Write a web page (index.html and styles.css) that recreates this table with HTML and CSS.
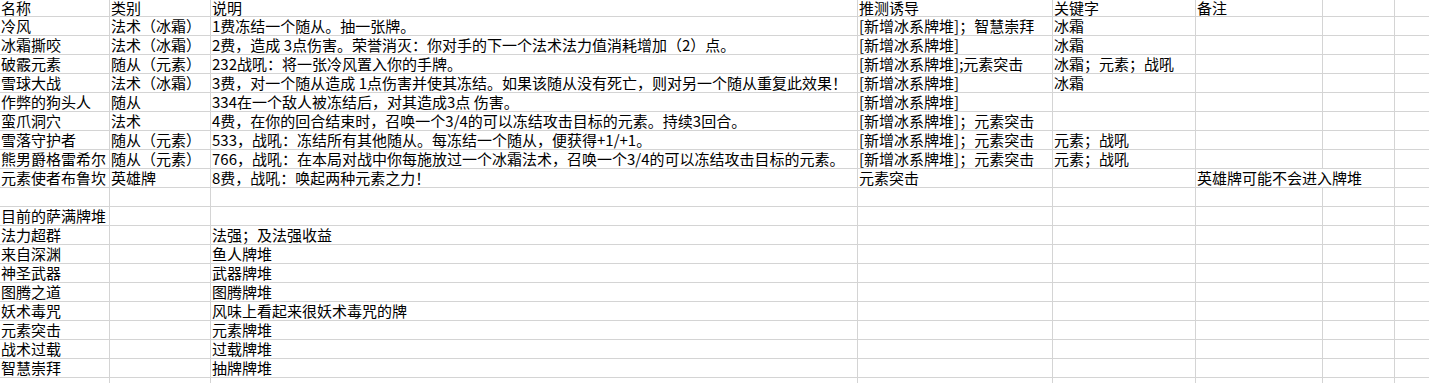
FILE: index.html
```html
<!DOCTYPE html>
<html lang="zh-CN">
<head>
<meta charset="utf-8">
<title>萨满牌堆</title>
<link rel="stylesheet" href="styles.css">
</head>
<body>
<div class="sheet">
  <div class="c h">名称</div><div class="c h">类别</div><div class="c h">说明</div><div class="c h">推测诱导</div><div class="c h">关键字</div><div class="c h">备注</div><div class="c h"></div><div class="c h"></div>

  <div class="c">冷风</div><div class="c">法术（冰霜）</div><div class="c">1费冻结一个随从。抽一张牌。</div><div class="c">[新增冰系牌堆]；智慧崇拜</div><div class="c">冰霜</div><div class="c"></div><div class="c"></div><div class="c"></div>

  <div class="c">冰霜撕咬</div><div class="c">法术（冰霜）</div><div class="c">2费，造成 3点伤害。荣誉消灭：你对手的下一个法术法力值消耗增加（2）点。</div><div class="c">[新增冰系牌堆]</div><div class="c">冰霜</div><div class="c"></div><div class="c"></div><div class="c"></div>

  <div class="c">破霰元素</div><div class="c">随从（元素）</div><div class="c">232战吼：将一张冷风置入你的手牌。</div><div class="c">[新增冰系牌堆];元素突击</div><div class="c">冰霜；元素；战吼</div><div class="c"></div><div class="c"></div><div class="c"></div>

  <div class="c">雪球大战</div><div class="c">法术（冰霜）</div><div class="c">3费，对一个随从造成 1点伤害并使其冻结。如果该随从没有死亡，则对另一个随从重复此效果！</div><div class="c">[新增冰系牌堆]</div><div class="c">冰霜</div><div class="c"></div><div class="c"></div><div class="c"></div>

  <div class="c">作弊的狗头人</div><div class="c">随从</div><div class="c">334在一个敌人被冻结后，对其造成3点 伤害。</div><div class="c">[新增冰系牌堆]</div><div class="c"></div><div class="c"></div><div class="c"></div><div class="c"></div>

  <div class="c">蛮爪洞穴</div><div class="c">法术</div><div class="c">4费，在你的回合结束时，召唤一个3/4的可以冻结攻击目标的元素。持续3回合。</div><div class="c">[新增冰系牌堆]；元素突击</div><div class="c"></div><div class="c"></div><div class="c"></div><div class="c"></div>

  <div class="c">雪落守护者</div><div class="c">随从（元素）</div><div class="c">533，战吼：冻结所有其他随从。每冻结一个随从，便获得+1/+1。</div><div class="c">[新增冰系牌堆]；元素突击</div><div class="c">元素；战吼</div><div class="c"></div><div class="c"></div><div class="c"></div>

  <div class="c">熊男爵格雷希尔</div><div class="c">随从（元素）</div><div class="c">766，战吼：在本局对战中你每施放过一个冰霜法术，召唤一个3/4的可以冻结攻击目标的元素。</div><div class="c">[新增冰系牌堆]；元素突击</div><div class="c">元素；战吼</div><div class="c"></div><div class="c"></div><div class="c"></div>

  <div class="c">元素使者布鲁坎</div><div class="c">英雄牌</div><div class="c">8费，战吼：唤起两种元素之力！</div><div class="c">元素突击</div><div class="c"></div><div class="c span2">英雄牌可能不会进入牌堆</div><div class="c"></div>

  <div class="c"></div><div class="c"></div><div class="c"></div><div class="c"></div><div class="c"></div><div class="c"></div><div class="c"></div><div class="c"></div>

  <div class="c">目前的萨满牌堆</div><div class="c"></div><div class="c"></div><div class="c"></div><div class="c"></div><div class="c"></div><div class="c"></div><div class="c"></div>

  <div class="c">法力超群</div><div class="c"></div><div class="c">法强；及法强收益</div><div class="c"></div><div class="c"></div><div class="c"></div><div class="c"></div><div class="c"></div>

  <div class="c">来自深渊</div><div class="c"></div><div class="c">鱼人牌堆</div><div class="c"></div><div class="c"></div><div class="c"></div><div class="c"></div><div class="c"></div>

  <div class="c">神圣武器</div><div class="c"></div><div class="c">武器牌堆</div><div class="c"></div><div class="c"></div><div class="c"></div><div class="c"></div><div class="c"></div>

  <div class="c">图腾之道</div><div class="c"></div><div class="c">图腾牌堆</div><div class="c"></div><div class="c"></div><div class="c"></div><div class="c"></div><div class="c"></div>

  <div class="c">妖术毒咒</div><div class="c"></div><div class="c">风味上看起来很妖术毒咒的牌</div><div class="c"></div><div class="c"></div><div class="c"></div><div class="c"></div><div class="c"></div>

  <div class="c">元素突击</div><div class="c"></div><div class="c">元素牌堆</div><div class="c"></div><div class="c"></div><div class="c"></div><div class="c"></div><div class="c"></div>

  <div class="c">战术过载</div><div class="c"></div><div class="c">过载牌堆</div><div class="c"></div><div class="c"></div><div class="c"></div><div class="c"></div><div class="c"></div>

  <div class="c">智慧崇拜</div><div class="c"></div><div class="c">抽牌牌堆</div><div class="c"></div><div class="c"></div><div class="c"></div><div class="c"></div><div class="c"></div>

  <div class="c"></div><div class="c"></div><div class="c"></div><div class="c"></div><div class="c"></div><div class="c"></div><div class="c"></div><div class="c"></div>
</div>
</body>
</html>
```

FILE: styles.css
```css
html, body {
  margin: 0;
  padding: 0;
  background: #ffffff;
  overflow: hidden;
  width: 1429px;
  height: 383px;
}

.sheet {
  display: grid;
  grid-template-columns: 110px 101px 647px 195px 143px 127px 72px 100px;
  grid-template-rows: 17px;
  grid-auto-rows: 19px;
  font-family: "Noto Sans CJK SC", "Noto Sans", sans-serif;
  font-size: 15px;
  line-height: 18px;
  color: #000000;
  width: max-content;
}

.c {
  box-sizing: border-box;
  border-right: 1px solid #d4d4d4;
  border-bottom: 1px solid #d4d4d4;
  padding-left: 1px;
  white-space: nowrap;
}

.h {
  line-height: 15px;
}

.span2 {
  grid-column: span 2;
}
```
